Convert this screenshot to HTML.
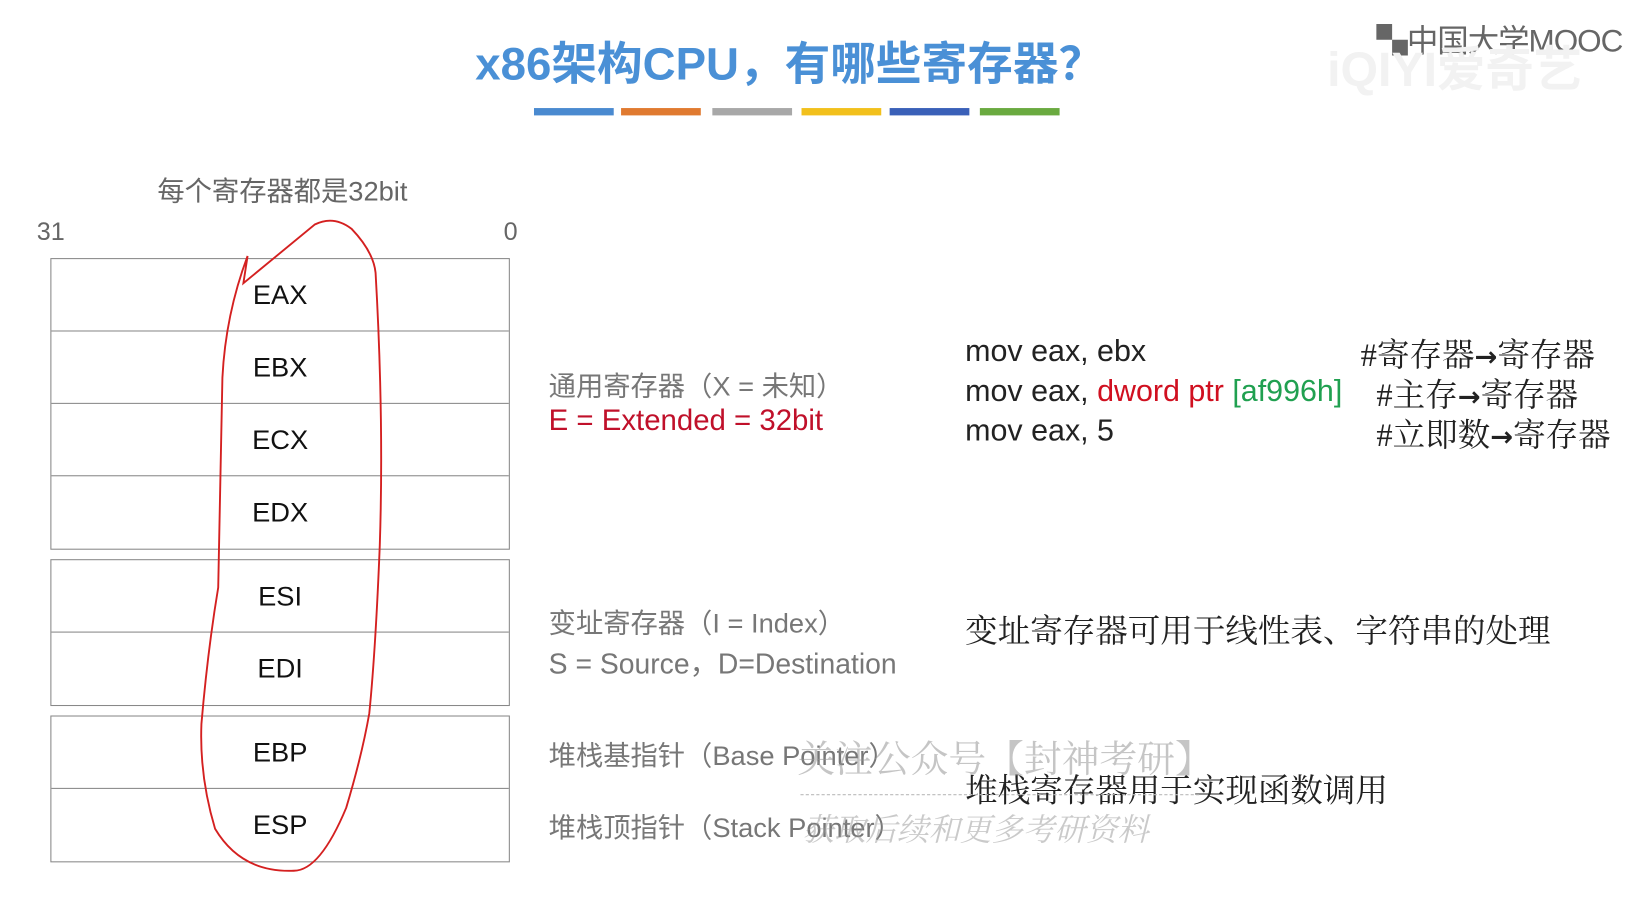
<!DOCTYPE html>
<html><head><meta charset="utf-8"><style>
html,body{margin:0;padding:0;background:#fff;width:1645px;height:919px;overflow:hidden}
#s{position:absolute;left:0;top:0;width:1568px;height:876px;transform:scale(1.0491);transform-origin:0 0;font-family:"Liberation Sans","Noto Sans CJK SC",sans-serif}
.a{position:absolute;white-space:nowrap}
.bar{position:absolute;top:103px;height:7px;width:76px}
.box{position:absolute;left:48px;width:438px;border:1.5px solid #888;box-sizing:border-box}
.row{height:69px;border-bottom:1.5px solid #888;box-sizing:border-box;text-align:center;line-height:69px;font-size:26px;color:#111}
.row:last-child{border-bottom:none}
.m{font-size:25px;color:#777}
.c{font-size:29px;color:#222}
.sf{font-family:"Liberation Serif","Noto Serif CJK SC",serif;font-size:31px}
.ar{font-family:"DejaVu Sans",sans-serif;font-weight:bold;font-size:26px}
</style></head><body><div id="s">
<div class="a" style="left:453px;top:26px;font-size:43.5px;font-weight:bold;color:#4a90d6">x86架构CPU，有哪些寄存器？</div>
<div class="bar" style="left:509px;background:#4a8ad0"></div>
<div class="bar" style="left:592px;background:#e07a30"></div>
<div class="bar" style="left:679px;background:#a8a8a8"></div>
<div class="bar" style="left:764px;background:#f2c01c"></div>
<div class="bar" style="left:848px;background:#3a60b8"></div>
<div class="bar" style="left:934px;background:#6aaa40"></div>

<div class="a" style="left:1312px;top:14px;font-size:30px;color:#666;letter-spacing:-1px">▚中国大学MOOC</div>
<div class="a" style="left:1265px;top:30px;font-size:46px;font-weight:bold;color:#f2f2f2">iQIYI爱奇艺</div>

<div class="a" style="left:150px;top:162px;font-size:26px;color:#666">每个寄存器都是32bit</div>
<div class="a" style="left:35px;top:208px;font-size:24px;color:#666">31</div>
<div class="a" style="left:480px;top:208px;font-size:24px;color:#666">0</div>

<div class="box" style="top:246px"><div class="row">EAX</div><div class="row">EBX</div><div class="row">ECX</div><div class="row">EDX</div></div>
<div class="box" style="top:533px"><div class="row">ESI</div><div class="row">EDI</div></div>
<div class="box" style="top:682px"><div class="row">EBP</div><div class="row">ESP</div></div>

<svg class="a" style="left:0;top:0" width="1568" height="876"><path d="M236 244 L232 270 L300 214 Q318 205 335 218 Q356 240 358 260 Q366 400 362 520 Q358 620 352 680 Q345 720 330 770 Q305 830 280 830 Q230 832 205 790 Q190 740 192 690 Q198 620 208 560 Q210 450 212 360 Q215 300 236 244" fill="none" stroke="#d42020" stroke-width="1.8"/></svg>

<div class="a m" style="left:523px;top:348px;font-size:26px">通用寄存器（X = 未知）</div>
<div class="a" style="left:523px;top:385px;font-size:28px;color:#c0102a">E = Extended = 32bit</div>
<div class="a m" style="left:523px;top:574px;font-size:26px">变址寄存器（I = Index）</div>
<div class="a m" style="left:523px;top:611px;font-size:27px">S = Source，D=Destination</div>
<div class="a m" style="left:523px;top:700px;font-size:26px">堆栈基指针（Base Pointer）</div>
<div class="a m" style="left:523px;top:769px;font-size:26px">堆栈顶指针（Stack Pointer）</div>

<div class="a c" style="left:920px;top:319px">mov eax, ebx</div>
<div class="a c" style="left:920px;top:357px">mov eax, <span style="color:#d01020">dword ptr</span> <span style="color:#20a050">[af996h]</span></div>
<div class="a c" style="left:920px;top:395px">mov eax, 5</div>
<div class="a c sf" style="left:1297px;top:313px">#寄存器<span class="ar">→</span>寄存器</div>
<div class="a c sf" style="left:1312px;top:351px">#主存<span class="ar">→</span>寄存器</div>
<div class="a c sf" style="left:1312px;top:389px">#立即数<span class="ar">→</span>寄存器</div>
<div class="a c sf" style="left:920px;top:576px">变址寄存器可用于线性表、字符串的处理</div>
<div class="a c sf" style="left:920px;top:728px">堆栈寄存器用于实现函数调用</div>

<div class="a sf" style="left:760px;top:696px;font-size:36px;color:rgba(150,150,150,.55)">关注公众号【封神考研】</div>
<div class="a" style="left:763px;top:757px;width:380px;border-top:1.5px dashed #bbb"></div>
<div class="a sf" style="left:765px;top:766px;font-size:30px;color:rgba(150,150,150,.5);font-style:italic">获取后续和更多考研资料</div>
</div></body></html>
